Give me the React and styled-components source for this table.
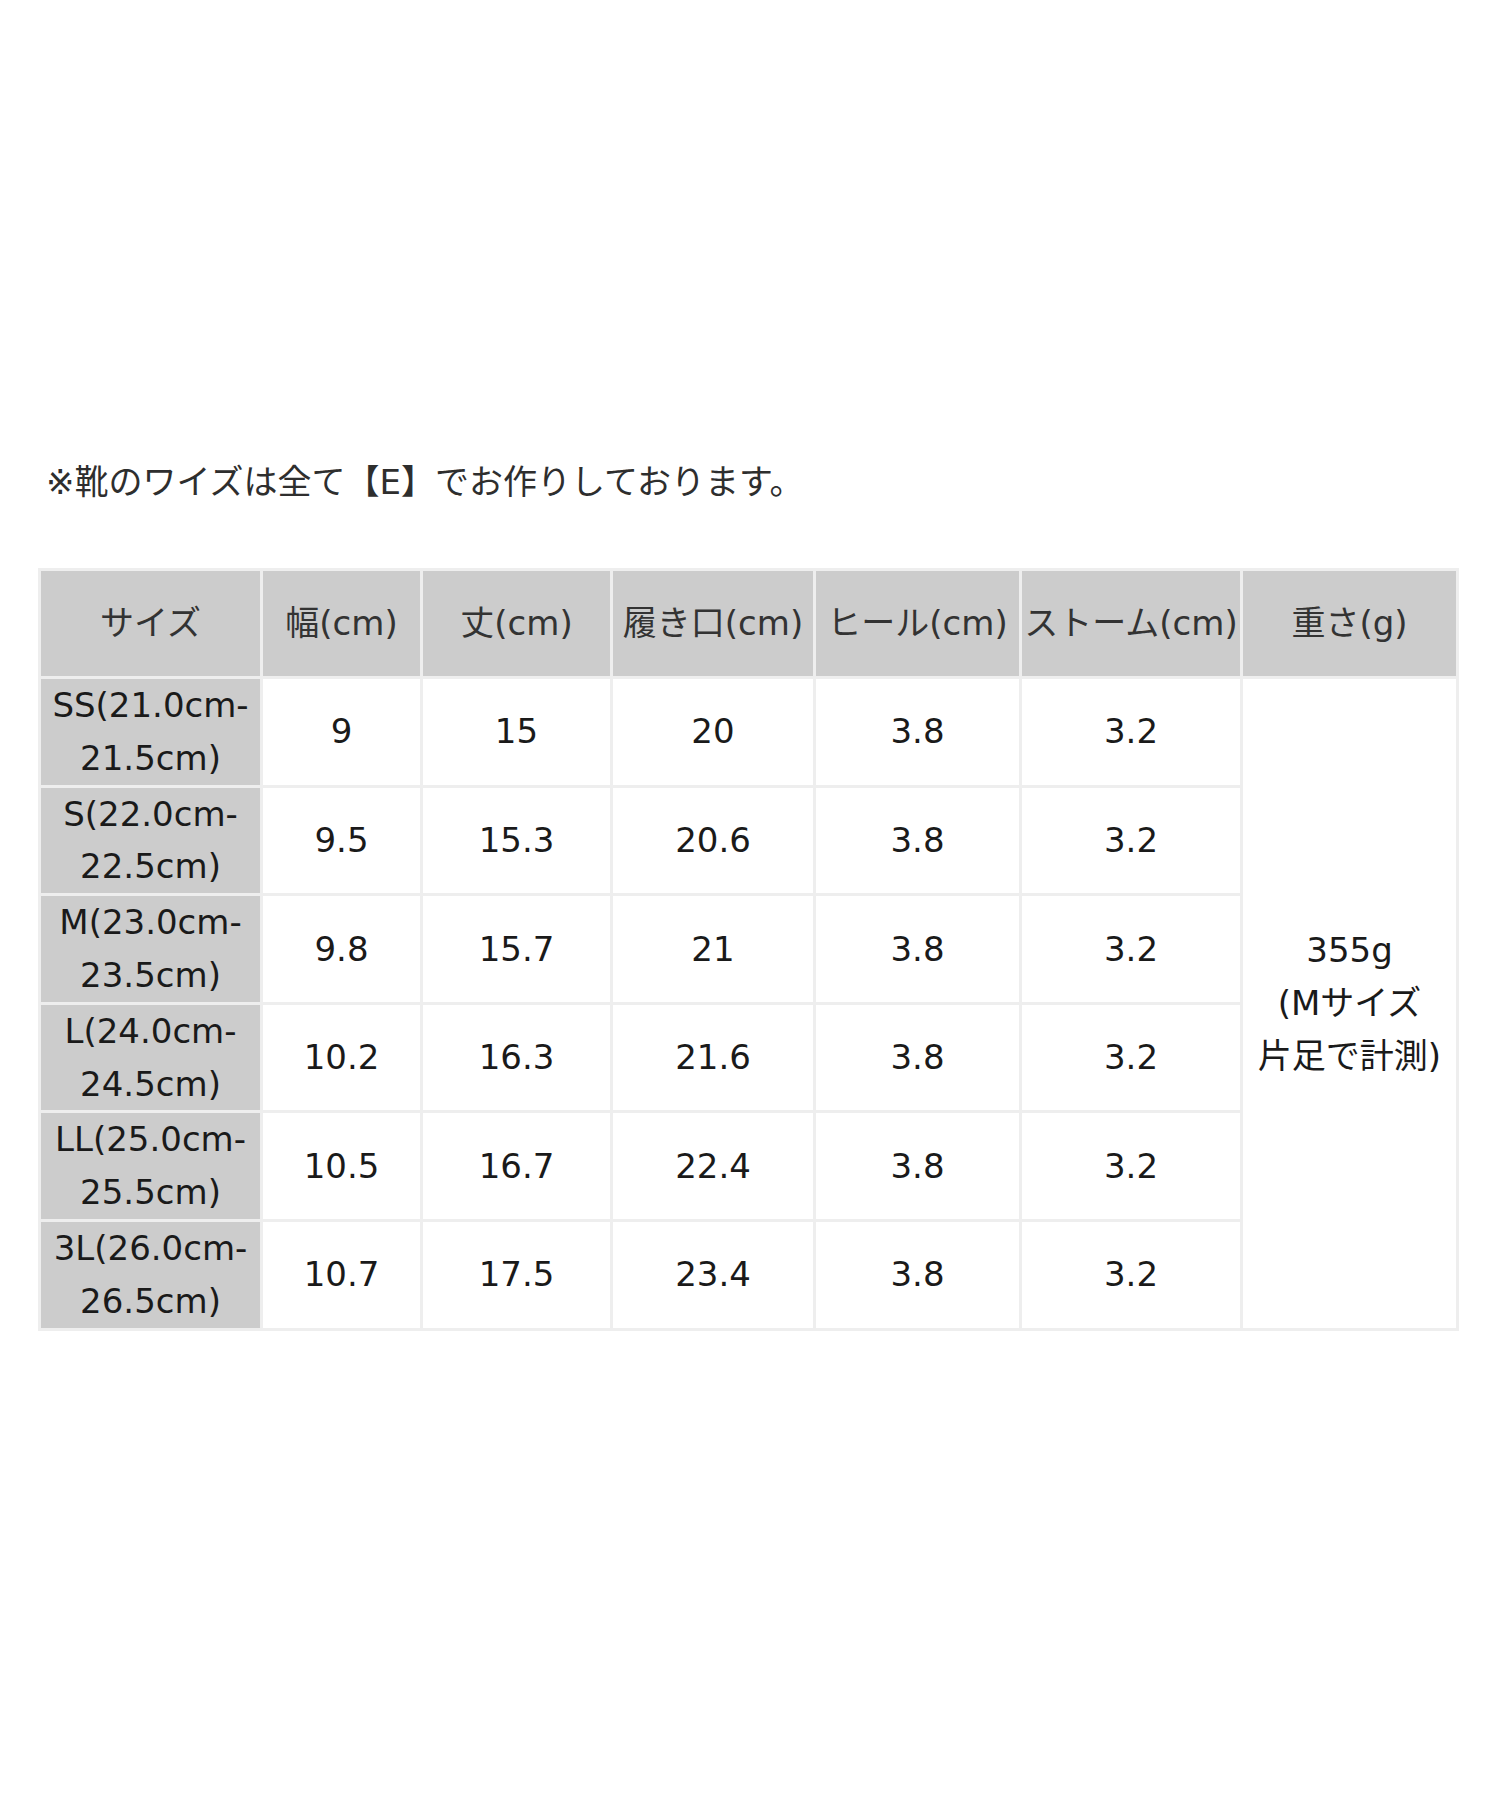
import React from "react";
import styled, { createGlobalStyle } from "styled-components";

const Global = createGlobalStyle`
  html, body { margin: 0; padding: 0; background: #fff; }
  body { font-family: "DejaVu Sans", "Noto Sans CJK JP", sans-serif; }
`;

const Page = styled.div`
  width: 1500px;
  min-height: 1800px;
  box-sizing: border-box;
  padding: 456px 0 0 38px;
`;

const Note = styled.p`
  margin: 0 0 59px 0;
  padding-left: 8px;
  font-size: 34px;
  line-height: 53px;
  color: #2e2e2e;
`;

const Table = styled.table`
  border-collapse: separate;
  border-spacing: 3px;
  background: #eee;
  table-layout: fixed;
  width: 1421px;
  font-size: 34px;
  line-height: 52.8px;
`;

const Col = styled.col`
  width: ${(p) => p.$w}px;
`;

const Th = styled.th`
  background: #ccc;
  color: #333;
  font-weight: normal;
  height: 105px;
  padding: 0;
  text-align: center;
  vertical-align: middle;
  white-space: nowrap;
`;

const SizeCell = styled.td`
  background: #ccc;
  color: #1a1a1a;
  padding: 0;
  text-align: center;
  vertical-align: middle;
`;

const Td = styled.td`
  background: #fff;
  color: #1a1a1a;
  padding: 0;
  text-align: center;
  vertical-align: middle;
`;

const widths = [219, 157, 187, 200, 203, 218, 213];
const heads = ["サイズ", "幅(cm)", "丈(cm)", "履き口(cm)", "ヒール(cm)", "ストーム(cm)", "重さ(g)"];
const rows = [
  ["SS(21.0cm-", "21.5cm)", "9", "15", "20"],
  ["S(22.0cm-", "22.5cm)", "9.5", "15.3", "20.6"],
  ["M(23.0cm-", "23.5cm)", "9.8", "15.7", "21"],
  ["L(24.0cm-", "24.5cm)", "10.2", "16.3", "21.6"],
  ["LL(25.0cm-", "25.5cm)", "10.5", "16.7", "22.4"],
  ["3L(26.0cm-", "26.5cm)", "10.7", "17.5", "23.4"],
];

export default function App() {
  return (
    <Page>
      <Global />
      <Note>※靴のワイズは全て【E】でお作りしております。</Note>
      <Table>
        <colgroup>
          {widths.map((w, i) => (
            <Col key={i} $w={w} />
          ))}
        </colgroup>
        <thead>
          <tr>
            {heads.map((h) => (
              <Th key={h}>{h}</Th>
            ))}
          </tr>
        </thead>
        <tbody>
          {rows.map((r, i) => (
            <tr key={r[0]}>
              <SizeCell>
                {r[0]}
                <br />
                {r[1]}
              </SizeCell>
              <Td>{r[2]}</Td>
              <Td>{r[3]}</Td>
              <Td>{r[4]}</Td>
              <Td>3.8</Td>
              <Td>3.2</Td>
              {i === 0 && (
                <Td rowSpan={6}>
                  355g
                  <br />
                  (Mサイズ
                  <br />
                  片足で計測)
                </Td>
              )}
            </tr>
          ))}
        </tbody>
      </Table>
    </Page>
  );
}
